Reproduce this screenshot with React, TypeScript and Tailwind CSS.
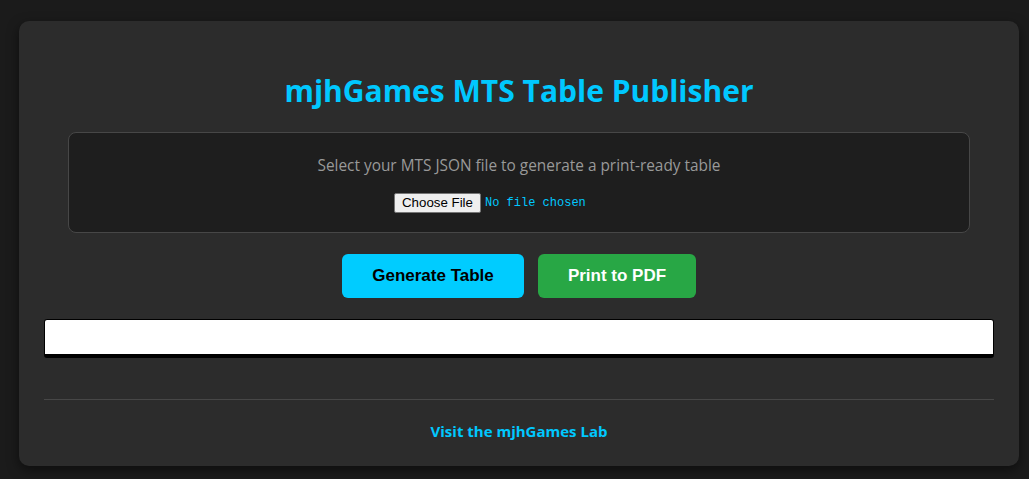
import React from "react";

export default function App() {
  return (
    <div className="min-h-[479px] w-full bg-[#1b1b1b] pl-[19px] pr-[10px] pt-[21px] pb-[14px]">
      <div
        className="flex w-[1000px] flex-col rounded-[10px] bg-[#2c2c2c] px-[25px] pt-[51px] pb-[24px] shadow-[0_4px_12px_rgba(0,0,0,0.5)]"
        style={{ fontFamily: '"Open Sans", "Noto Sans", sans-serif' }}
      >
        <h1 className="h-[38px] text-center text-[30px] font-bold leading-[38px] text-[#00c8ff]">
          mjhGames MTS Table Publisher
        </h1>
        <div className="mx-auto mt-[22px] flex h-[101px] w-[902px] flex-col items-center rounded-[8px] border border-[#474747] bg-[#1e1e1e] pt-[22px]">
          <p className="h-[22px] text-[15.4px] leading-[22px] text-[#999999]">
            Select your MTS JSON file to generate a print-ready table
          </p>
          <div className="mt-[16px] flex w-[250px] items-center">
            <span
              className="flex h-[20px] w-[87px] items-center justify-center rounded-[2px] border border-[#767676] bg-[#efefef] text-[13.3px] text-black"
              style={{ fontFamily: '"Liberation Sans", Arial, sans-serif' }}
            >
              Choose File
            </span>
            <span
              className="ml-[4px] text-[12px] text-[#00c8ff]"
              style={{ fontFamily: '"Liberation Mono", monospace' }}
            >
              No file chosen
            </span>
          </div>
        </div>
        <div
          className="mt-[21px] flex justify-center gap-[14px]"
          style={{ fontFamily: '"Liberation Sans", Arial, sans-serif' }}
        >
          <button className="h-[44px] w-[182px] rounded-[6px] bg-[#00ccff] text-[17px] font-bold text-black">
            Generate Table
          </button>
          <button className="h-[44px] w-[158px] rounded-[6px] bg-[#28a745] text-[17px] font-bold text-white">
            Print to PDF
          </button>
        </div>
        <div className="mt-[21px] h-[39px] rounded-[3px] border border-b-[4px] border-black bg-white" />
        <div className="mt-[41px] h-px bg-[#474747]" />
        <div className="mt-[20px] flex justify-center">
          <a className="text-[15px] font-bold leading-[22px] text-[#00c8ff]">
            Visit the mjhGames Lab
          </a>
        </div>
      </div>
    </div>
  );
}
